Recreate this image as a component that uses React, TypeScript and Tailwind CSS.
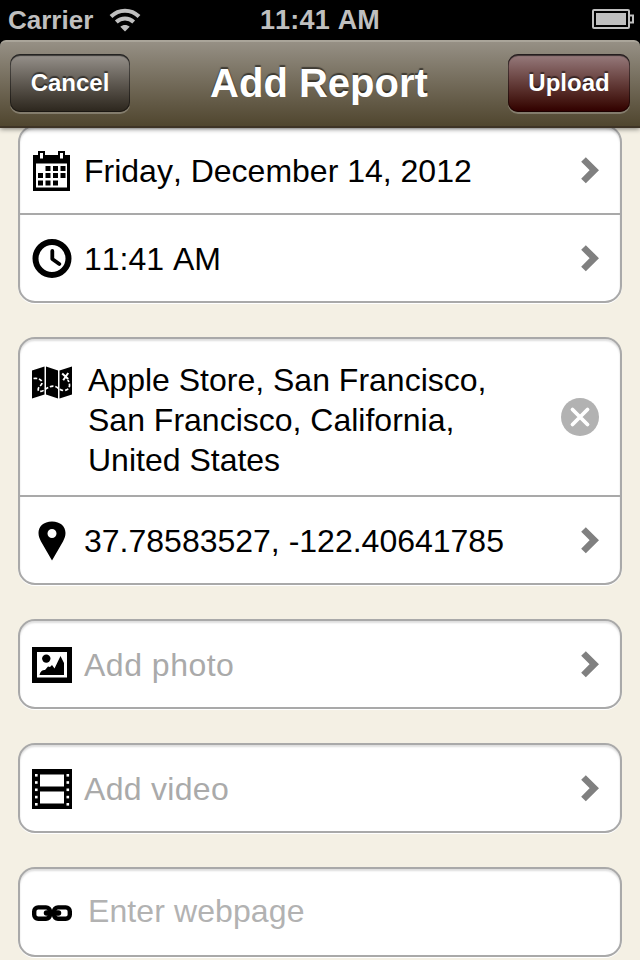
import type { ReactNode } from "react";

function Chevron() {
  return (
    <svg width="18" height="27" viewBox="0 0 18 27" className="mr-[21px] shrink-0">
      <path d="M2.500 2.500 13.300 13.200 2.500 24" fill="none" stroke="#808080" strokeWidth="6.600" />
    </svg>
  );
}

function CalendarIcon() {
  return (
    <svg width="40" height="40" viewBox="0 0 40 40">
      <path d="M1 4h5V0h7v4h13V0h7v4h5v36H1z" fill="#000" />
      <path d="M8 2h3v5.500H8zM28 2h3v5.500h-3zM4 12.500h31v24H4z" fill="#fff" />
      <path
        d="M13.500 15h5v5h-5zM21 15h5v5h-5zM28.500 15h5v5h-5zM6 22h5v5H6zM13.500 22h5v5h-5zM21 22h5v5h-5zM28.500 22h5v5h-5zM6 29.500h5v5H6zM13.500 29.500h5v5h-5zM21 29.500h5v5h-5z"
        fill="#000"
      />
    </svg>
  );
}

function ClockIcon() {
  return (
    <svg width="40" height="40" viewBox="0 0 40 40" fill="none" stroke="#000">
      <circle cx="20" cy="19.500" r="16.500" strokeWidth="6" />
      <path d="M20.300 12v8l7 5" strokeWidth="3.800" strokeLinecap="round" strokeLinejoin="round" />
    </svg>
  );
}

function MapIcon() {
  return (
    <svg width="40" height="33" viewBox="0 0 40 33">
      <path d="M0 4.500 12.500.500v28L0 32.500zM14 .500l12 4v28l-12-4zM27.500 4.500 40 .500v28l-12.500 4z" fill="#000" />
      <g fill="none" stroke="#fff" strokeWidth="1.700">
        <path
          d="M1.500 12.500c4-.5 8 .5 8.500 4 .3 3-3.800 4-3.800 7 0 2.500 3 2.500 6 .5 3-2.200 6-4 9.500-3.800 4.500.3 5.500 4.300 10 4.300 6 0 7.500-6 4-10.500"
          strokeDasharray="3.600 1.800"
        />
        <path d="m30.200 7.500 6 5.500M36.200 7l-5 7.300" strokeWidth="2" />
      </g>
    </svg>
  );
}

function PinIcon() {
  return (
    <svg width="40" height="40" viewBox="0 0 40 40">
      <path
        d="M20 .500C11.500.500 6.500 5.500 6.500 12c0 3 1 5.500 2.500 8.500L20 39.500l11-19c1.500-3 2.500-5.500 2.500-8.500C33.500 5.500 28.500.500 20 .500zM20 8a4.500 4.500 0 1 1 0 9 4.500 4.500 0 0 1 0-9z"
        fillRule="evenodd"
      />
    </svg>
  );
}

function PhotoIcon() {
  return (
    <svg width="40" height="36" viewBox="0 0 40 36">
      <path d="M0 0h40v36H0z" />
      <path d="M5 5h30v25.500H5z" fill="#fff" />
      <circle cx="14.300" cy="11.600" r="4.200" />
      <path d="M7.500 28c1-4 3-5 5.500-5l3-3.500 2 .500 2-2 2.500 3.500L28.500 9l3.500 7v12z" />
    </svg>
  );
}

function FilmIcon() {
  const holes = [5, 12.2, 19.5, 26.8, 34];
  return (
    <svg width="40" height="40" viewBox="0 0 40 40">
      <path d="M0 0h40v40H0z" />
      <path d="M8 5.500h24v12H8zM8 22.500h24v12H8z" fill="#fff" />
      {holes.map((y) => (
        <g key={y} fill="#fff">
          <rect x="3" y={y} width="2.600" height="2.600" />
          <rect x="34.500" y={y} width="2.600" height="2.600" />
        </g>
      ))}
    </svg>
  );
}

function LinkIcon() {
  return (
    <svg width="40" height="16" viewBox="0 0 40 16" fill="none" stroke="#000" strokeWidth="4.400">
      <rect x="2.200" y="2.400" width="15.800" height="11.400" rx="4" />
      <rect x="22" y="2.400" width="15.800" height="11.400" rx="4" />
      <path d="M14.500 8h12" strokeWidth="5.500" strokeLinecap="round" />
    </svg>
  );
}

function Card({ children }: { children: ReactNode }) {
  return (
    <section className="shrink-0 divide-y-2 divide-[#a9a9a9] overflow-hidden rounded-[17px] border-2 border-[#a9a9a9] bg-white shadow-[0_1px_0_#fff,inset_0_2px_2px_#dedede]">
      {children}
    </section>
  );
}

function Row({
  icon,
  text,
  textStyle = "pl-3 pt-[2px] text-black",
  arrow = true,
}: {
  icon: ReactNode;
  text: string;
  textStyle?: string;
  arrow?: boolean;
}) {
  return (
    <div className="box-content flex h-[86px] items-center pl-3">
      <span className="flex w-10 shrink-0 justify-center pt-[2px]">{icon}</span>
      <span className={`${textStyle} grow whitespace-nowrap`}>{text}</span>
      {arrow && <Chevron />}
    </div>
  );
}

function BarButton({ label, tone }: { label: string; tone: string }) {
  return (
    <button
      className={`${tone} h-[58px] rounded-[10px] bg-linear-to-b text-[24px] shadow-[0_2px_0_rgba(255,255,255,0.25),inset_0_2px_1px_rgba(0,0,0,0.6),inset_0_0_0_1px_rgba(0,0,0,0.4)] [text-shadow:0_-2px_1px_rgba(0,0,0,0.5)]`}
    >
      {label}
    </button>
  );
}

export default function App() {
  return (
    <div className="flex h-[960px] w-[640px] flex-col overflow-hidden bg-[#f4f0e4] font-['Liberation_Sans',Arial,sans-serif] text-[32px] leading-10 [font-kerning:none]">
      <div className="grid h-10 shrink-0 grid-cols-3 items-center bg-black text-[27px] font-bold text-[#bfbfbf]">
        <div className="flex items-center gap-4 pl-2">
          <span className="text-[26px]">Carrier</span>
          <svg width="32" height="24" viewBox="0 0 32 24" fill="none" stroke="#bfbfbf" strokeWidth="4">
            <path d="M2 8.500C10 .700 22 .700 30 8.500" />
            <path d="M7.300 14c5-4.800 12.400-4.800 17.400 0" />
            <path d="M16 23.500l-4.700-4.700c2.800-2.300 6.600-2.300 9.400 0z" fill="#bfbfbf" stroke="none" />
          </svg>
        </div>
        <div className="text-center tracking-[0.2px]">11:41 AM</div>
        <svg width="42" height="20" viewBox="0 0 42 20" className="mt-[-2px] mr-[6px] justify-self-end" fill="none" stroke="#bfbfbf" strokeWidth="2">
          <rect x="1" y="1" width="36" height="18" rx="1" />
          <path d="M4 4h30v12H4z" fill="#bfbfbf" stroke="none" />
          <path d="M37 6.500h4v7h-4" />
        </svg>
      </div>

      <div className="z-10 shrink-0 bg-black">
        <header className="flex h-[88px] items-center justify-between rounded-t-[6px] border-t-2 border-b-2 border-t-[#aaa59a] border-b-[#3e3426] bg-linear-to-b from-[#969085] to-[#50462f] px-[10px] pb-[2px] font-bold text-white shadow-[0_1px_5px_rgba(0,0,0,0.5)]">
          <BarButton label="Cancel" tone="w-[120px] from-[#98938d] to-[#2c261d]" />
          <h1 className="text-[40px] [text-shadow:0_-2px_1px_rgba(0,0,0,0.5)]">Add Report</h1>
          <BarButton label="Upload" tone="w-[122px] from-[#987d7f] to-[#300000]" />
        </header>
      </div>

      <main className="-mt-[3px] flex flex-col gap-[34px] px-[18px]">
        <Card>
          <Row icon={<CalendarIcon />} text="Friday, December 14, 2012" />
          <Row icon={<ClockIcon />} text="11:41 AM" />
        </Card>
        <Card>
          <div className="box-content flex h-[156px] items-center pl-3">
            <span className="-mt-[69px] shrink-0">
              <MapIcon />
            </span>
            <p className="grow pt-[6px] pl-4">
              Apple Store, San Francisco,
              <br />
              San Francisco, California,
              <br />
              United States
            </p>
            <svg width="38" height="38" viewBox="0 0 38 38" className="mr-[21px] shrink-0">
              <circle cx="19" cy="19" r="19" fill="#b2b2b2" />
              <path d="m11.500 11.500 15 15m0-15-15 15" stroke="#fff" strokeWidth="3.800" strokeLinecap="round" />
            </svg>
          </div>
          <Row icon={<PinIcon />} text="37.78583527, -122.40641785" />
        </Card>
        <Card>
          <Row icon={<PhotoIcon />} text="Add photo" textStyle="pl-3 pt-[2px] text-[#aaa] tracking-[0.5px]" />
        </Card>
        <Card>
          <Row icon={<FilmIcon />} text="Add video" textStyle="pl-3 pt-[2px] text-[#aaa] tracking-[0.3px]" />
        </Card>
        <Card>
          <Row icon={<LinkIcon />} text="Enter webpage" textStyle="pl-4 pb-[2px] text-[#b2b2b2] tracking-[0.1px]" arrow={false} />
        </Card>
      </main>
    </div>
  );
}
